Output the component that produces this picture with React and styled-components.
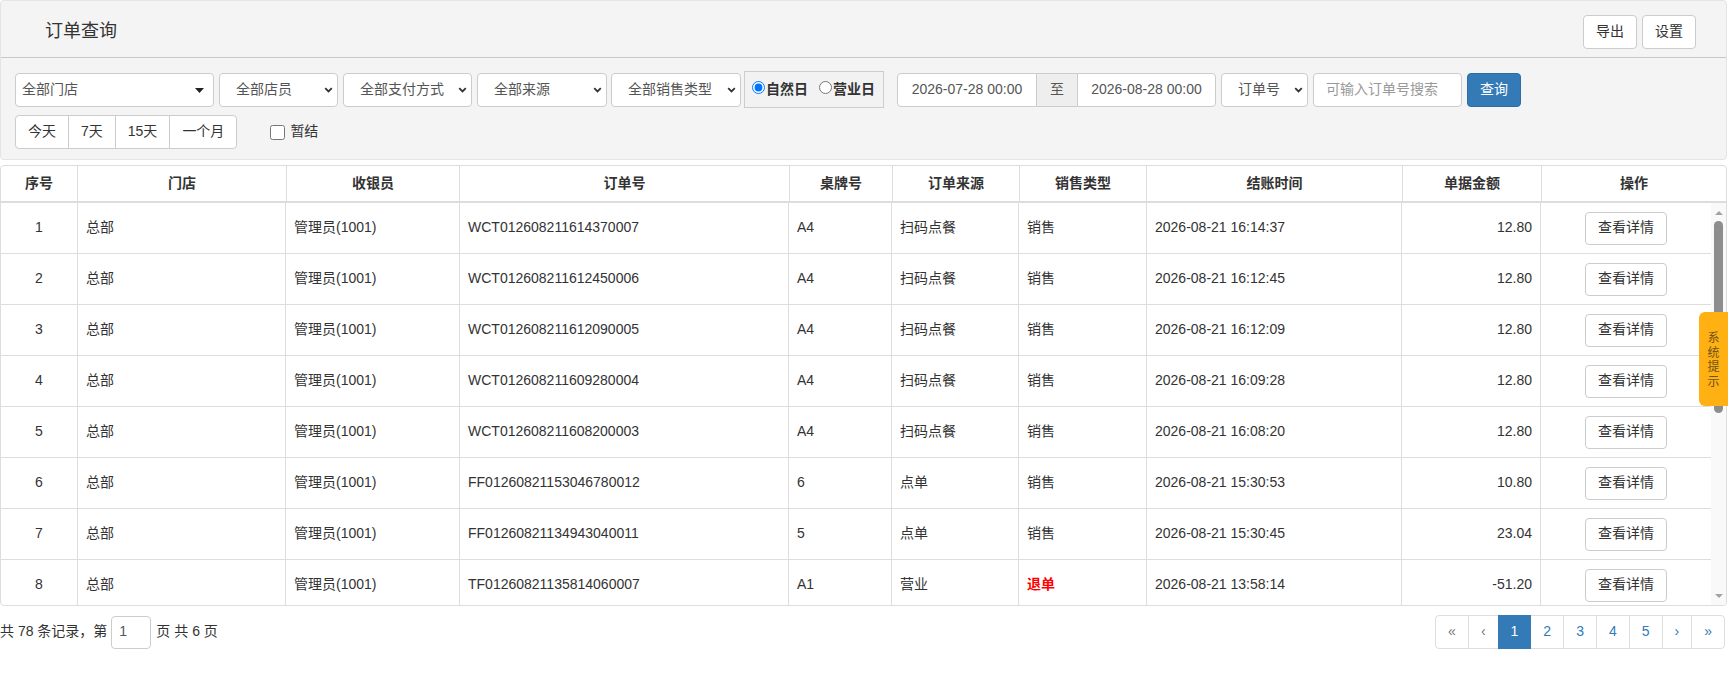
import React from 'react';
import styled, { createGlobalStyle } from 'styled-components';

const GlobalStyle = createGlobalStyle`
  html, body {
    margin: 0;
    padding: 0;
    background: #fff;
  }
  body {
    font-family: "Liberation Sans", Arial, "Noto Sans CJK SC", sans-serif;
    font-size: 14px;
    line-height: 1.42857;
    color: #333;
  }
  * {
    box-sizing: border-box;
  }
`;

const Page = styled.div`
  width: 1727px;
`;

const Panel = styled.section`
  background: #f4f4f4;
  border: 1px solid #e4e4e4;
  border-radius: 4px;
`;

const TitleBar = styled.div`
  height: 57px;
  padding: 6px 30px 0 44px;
  display: flex;
  align-items: center;
  justify-content: space-between;
  border-bottom: 1px solid #c8c8c8;
`;

const Title = styled.h3`
  margin: 0;
  font-size: 18px;
  font-weight: normal;
  color: #333;
`;

const Actions = styled.div`
  display: flex;
  gap: 5px;
`;

const Button = styled.button`
  font: inherit;
  height: 34px;
  padding: 0 12px;
  color: ${(p) => (p.$primary ? '#fff' : '#333')};
  background: ${(p) => (p.$primary ? '#337ab7' : '#fff')};
  border: 1px solid ${(p) => (p.$primary ? '#2e6da4' : '#ccc')};
  border-radius: 4px;
  cursor: pointer;
`;

const Filters = styled.div`
  padding: 15px 14px 10px;
`;

const FilterRow = styled.div`
  display: flex;
  align-items: flex-start;
  height: 34px;
  margin-top: ${(p) => p.$mt || 0}px;
`;

const SelectBox = styled.div`
  width: ${(p) => p.$w}px;
  height: 34px;
  margin-right: ${(p) => (p.$mr ?? 5)}px;
  padding: 0 ${(p) => (p.$caret ? 9 : 4)}px 0 ${(p) => (p.$caret ? 6 : 16)}px;
  display: flex;
  align-items: center;
  justify-content: space-between;
  background: #fff;
  border: 1px solid #ccc;
  border-radius: 4px;
  color: #555;
  white-space: nowrap;
`;

const RadioBox = styled.div`
  height: 37px;
  margin: -2px 13px 0 0;
  padding: 0 8px 0 7px;
  display: flex;
  align-items: center;
  gap: 11px;
  background: #f2f2f2;
  border: 1px solid #ccc;
`;

const RadioLabel = styled.label`
  display: flex;
  align-items: center;
  font-weight: bold;
  color: #333;

  input {
    width: 13px;
    height: 13px;
    margin: -3px 1px 0 0;
  }
`;

const DateGroup = styled.div`
  display: flex;
  margin-right: 5px;
`;

const DateInput = styled.div`
  width: ${(p) => p.$w}px;
  height: 34px;
  display: flex;
  align-items: center;
  justify-content: center;
  background: #fff;
  border: 1px solid #ccc;
  border-radius: ${(p) => (p.$side === 'left' ? '4px 0 0 4px' : '0 4px 4px 0')};
  color: #555;
`;

const Addon = styled.div`
  width: 40px;
  height: 34px;
  display: flex;
  align-items: center;
  justify-content: center;
  background: #eee;
  border-top: 1px solid #ccc;
  border-bottom: 1px solid #ccc;
  color: #555;
`;

const SearchInput = styled.div`
  width: 149px;
  height: 34px;
  margin-right: 5px;
  padding-left: 12px;
  display: flex;
  align-items: center;
  background: #fff;
  border: 1px solid #ccc;
  border-radius: 4px;
  color: #999;
`;

const BtnGroup = styled.div`
  display: flex;

  button {
    border-radius: 0;
    margin-left: -1px;
  }
  button:first-child {
    margin-left: 0;
    border-radius: 4px 0 0 4px;
  }
  button:last-child {
    border-radius: 0 4px 4px 0;
  }
`;

const CheckLabel = styled.label`
  display: flex;
  align-items: center;
  height: 34px;
  margin-left: 33px;
  color: #333;

  input {
    width: 15px;
    height: 15px;
    margin: 0 5px 0 0;
  }
`;

const TableWrap = styled.div`
  margin-top: 5px;
  border: 1px solid #ddd;
  border-radius: 4px;
  overflow: hidden;
`;

const HeadRow = styled.div`
  display: grid;
  grid-template-columns: ${(p) => p.$cols};
  height: 37px;
  border-bottom: 2px solid #ddd;
`;

const HeadCell = styled.div`
  display: flex;
  align-items: center;
  justify-content: center;
  font-weight: bold;
  color: #333;
  & + & {
    border-left: 1px solid #ddd;
  }
`;

const Body = styled.div`
  height: 402px;
  display: flex;
`;

const Rows = styled.div`
  flex: 1;
  overflow: hidden;
`;

const ScrollBar = styled.div`
  width: 15px;
  display: flex;
  flex-direction: column;
  align-items: center;
  background: #f9f9f9;
`;

const ScrollArrow = styled.div`
  height: 17px;
  width: 15px;
  display: flex;
  align-items: center;
  justify-content: center;

  &::before {
    content: '';
    border-left: 4px solid transparent;
    border-right: 4px solid transparent;
    ${(p) => (p.$down ? 'border-top' : 'border-bottom')}: 4px solid #a3a3a3;
    margin-top: ${(p) => (p.$down ? '-2px' : '3px')};
  }
`;

const ScrollThumb = styled.div`
  width: 9px;
  height: 192px;
  margin-top: 1px;
  margin-bottom: auto;
  background: #8d8d8d;
  border-radius: 5px;
`;

const Row = styled.div`
  display: grid;
  grid-template-columns: ${(p) => p.$cols};
  height: 51px;
  flex-shrink: 0;
  border-bottom: 1px solid #ddd;
`;

const Cell = styled.div`
  display: flex;
  align-items: center;
  justify-content: ${(p) =>
    p.$align === 'center' ? 'center' : p.$align === 'right' ? 'flex-end' : 'flex-start'};
  padding: 0 8px;
  color: ${(p) => (p.$red ? '#f00' : '#333')};
  font-weight: ${(p) => (p.$red ? 'bold' : 'normal')};
  white-space: nowrap;
  & + & {
    border-left: 1px solid #ddd;
  }
`;

const DetailButton = styled(Button)`
  width: 82px;
  height: 33px;
  padding: 0;
`;

const Footer = styled.div`
  margin-top: 9px;
  display: flex;
  align-items: center;
  justify-content: space-between;
`;

const PageInfo = styled.div`
  display: flex;
  align-items: center;
  color: #333;
`;

const PageInput = styled.div`
  width: 40px;
  height: 33px;
  margin: 0 5px 0 4px;
  padding-left: 7px;
  display: flex;
  align-items: center;
  border: 1px solid #ccc;
  border-radius: 4px;
  color: #555;
`;

const Pager = styled.ul`
  display: flex;
  margin: 0 2px 0 0;
  padding: 0;
  list-style: none;
`;

const PageItem = styled.li`
  height: 34px;
  padding: 0 12px;
  margin-left: -1px;
  display: flex;
  align-items: center;
  border: 1px solid ${(p) => (p.$active ? '#337ab7' : '#ddd')};
  background: ${(p) => (p.$active ? '#337ab7' : '#fff')};
  color: ${(p) => (p.$active ? '#fff' : p.$muted ? '#777' : '#337ab7')};
  position: relative;
  z-index: ${(p) => (p.$active ? 2 : 1)};
  &:first-child {
    margin-left: 0;
    border-radius: 4px 0 0 4px;
  }
  &:last-child {
    border-radius: 0 4px 4px 0;
  }
`;

const NoticeTab = styled.div`
  position: fixed;
  top: 312px;
  right: 2px;
  width: 29px;
  height: 94px;
  display: flex;
  flex-direction: column;
  align-items: center;
  justify-content: center;
  background: #ffb012;
  border-radius: 6px 0 0 6px;
  color: #6e5118;
  font-family: "Noto Sans CJK SC", sans-serif;
  font-size: 12px;
  line-height: 14.5px;
`;

const Chevron = () => (
  <svg width="9" height="6" viewBox="0 0 9 6">
    <path d="M1.2 1.2 L4.5 4.5 L7.8 1.2" fill="none" stroke="#333" strokeWidth="1.8" />
  </svg>
);

const Caret = () => (
  <svg width="9" height="5" viewBox="0 0 9 5">
    <polygon points="0,0 9,0 4.5,5" fill="#222" />
  </svg>
);

const Select = ({ w, caret, mr, children }) => (
  <SelectBox $w={w} $caret={caret} $mr={mr}>
    <span>{children}</span>
    {caret ? <Caret /> : <Chevron />}
  </SelectBox>
);

const HEAD_COLS = '76px 209px 173px 330px 103px 127px 127px 256px 139px 1fr';
const BODY_COLS = '76px 208px 174px 329px 103px 127px 128px 255px 139px 1fr';

const headers = ['序号', '门店', '收银员', '订单号', '桌牌号', '订单来源', '销售类型', '结账时间', '单据金额', '操作'];

const orders = [
  ['WCT012608211614370007', 'A4', '扫码点餐', '销售', '2026-08-21 16:14:37', '12.80'],
  ['WCT012608211612450006', 'A4', '扫码点餐', '销售', '2026-08-21 16:12:45', '12.80'],
  ['WCT012608211612090005', 'A4', '扫码点餐', '销售', '2026-08-21 16:12:09', '12.80'],
  ['WCT012608211609280004', 'A4', '扫码点餐', '销售', '2026-08-21 16:09:28', '12.80'],
  ['WCT012608211608200003', 'A4', '扫码点餐', '销售', '2026-08-21 16:08:20', '12.80'],
  ['FF01260821153046780012', '6', '点单', '销售', '2026-08-21 15:30:53', '10.80'],
  ['FF01260821134943040011', '5', '点单', '销售', '2026-08-21 15:30:45', '23.04'],
  ['TF01260821135814060007', 'A1', '营业', '退单', '2026-08-21 13:58:14', '-51.20'],
];

const pages = [
  { label: '«', muted: true },
  { label: '‹', muted: true },
  { label: '1', active: true },
  { label: '2' },
  { label: '3' },
  { label: '4' },
  { label: '5' },
  { label: '›' },
  { label: '»' },
];

export default function App() {
  return (
    <Page>
      <GlobalStyle />
      <Panel>
        <TitleBar>
          <Title>订单查询</Title>
          <Actions>
            <Button>导出</Button>
            <Button>设置</Button>
          </Actions>
        </TitleBar>
        <Filters>
          <FilterRow>
            <Select w={199} caret>全部门店</Select>
            <Select w={119}>全部店员</Select>
            <Select w={129}>全部支付方式</Select>
            <Select w={130} mr={4}>全部来源</Select>
            <Select w={130} mr={3}>全部销售类型</Select>
            <RadioBox>
              <RadioLabel>
                <input type="radio" name="day" defaultChecked />
                自然日
              </RadioLabel>
              <RadioLabel>
                <input type="radio" name="day" />
                营业日
              </RadioLabel>
            </RadioBox>
            <DateGroup>
              <DateInput $w={140} $side="left">2026-07-28 00:00</DateInput>
              <Addon>至</Addon>
              <DateInput $w={139} $side="right">2026-08-28 00:00</DateInput>
            </DateGroup>
            <Select w={87}>订单号</Select>
            <SearchInput>可输入订单号搜索</SearchInput>
            <Button $primary>查询</Button>
          </FilterRow>
          <FilterRow $mt={8}>
            <BtnGroup>
              <Button>今天</Button>
              <Button>7天</Button>
              <Button>15天</Button>
              <Button>一个月</Button>
            </BtnGroup>
            <CheckLabel>
              <input type="checkbox" />
              暂结
            </CheckLabel>
          </FilterRow>
        </Filters>
      </Panel>

      <TableWrap>
        <HeadRow $cols={HEAD_COLS}>
          {headers.map((h) => (
            <HeadCell key={h}>{h}</HeadCell>
          ))}
        </HeadRow>
        <Body>
          <Rows>
            {orders.map(([no, table, source, type, time, amount], i) => (
              <Row key={no} $cols={BODY_COLS}>
                <Cell $align="center">{i + 1}</Cell>
                <Cell>总部</Cell>
                <Cell>管理员(1001)</Cell>
                <Cell>{no}</Cell>
                <Cell>{table}</Cell>
                <Cell>{source}</Cell>
                <Cell $red={type === '退单'}>{type}</Cell>
                <Cell>{time}</Cell>
                <Cell $align="right">{amount}</Cell>
                <Cell $align="center">
                  <DetailButton>查看详情</DetailButton>
                </Cell>
              </Row>
            ))}
          </Rows>
          <ScrollBar>
            <ScrollArrow />
            <ScrollThumb />
            <ScrollArrow $down />
          </ScrollBar>
        </Body>
      </TableWrap>

      <Footer>
        <PageInfo>
          共 78 条记录，第
          <PageInput>1</PageInput>
          页 共 6 页
        </PageInfo>
        <Pager>
          {pages.map((p, i) => (
            <PageItem key={i} $active={p.active} $muted={p.muted}>
              {p.label}
            </PageItem>
          ))}
        </Pager>
      </Footer>

      <NoticeTab>
        <span>系</span>
        <span>统</span>
        <span>提</span>
        <span>示</span>
      </NoticeTab>
    </Page>
  );
}
